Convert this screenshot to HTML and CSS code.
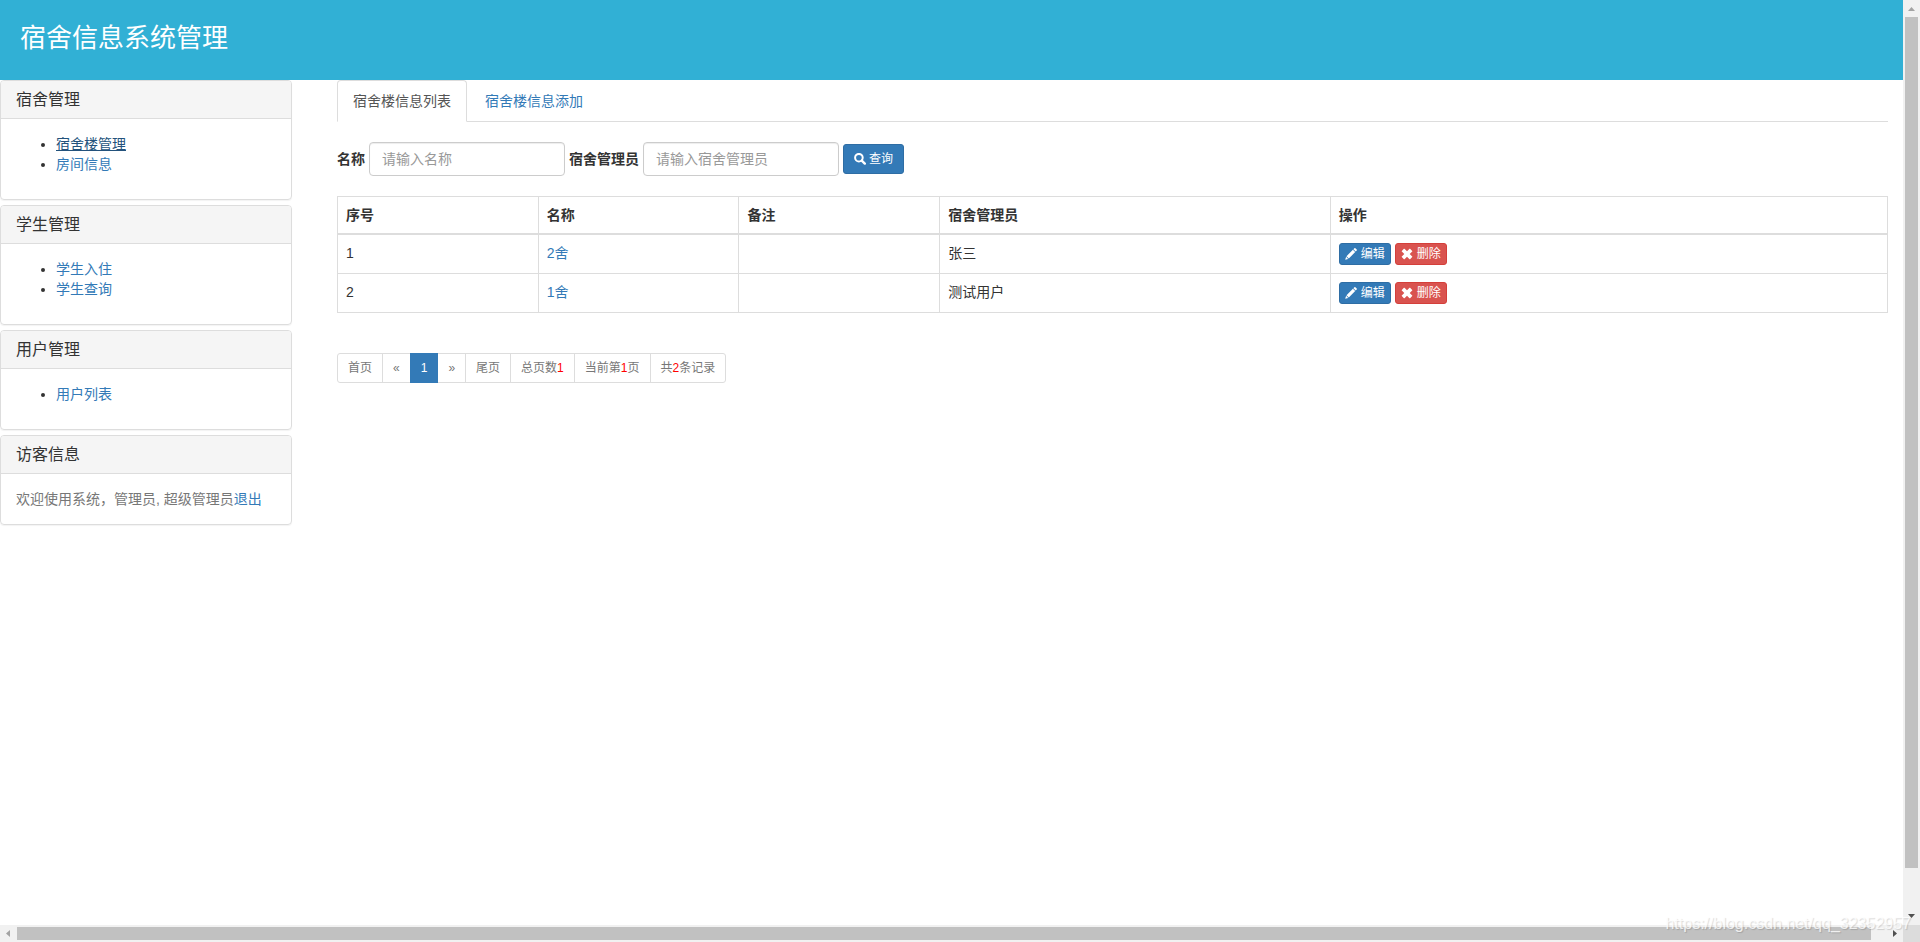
FILE: index.html
```html
<!DOCTYPE html>
<html lang="zh-CN">
<head>
<meta charset="utf-8">
<title>宿舍信息系统管理</title>
<link rel="stylesheet" href="styles.css">
</head>
<body>
<svg class="sprite" aria-hidden="true">
  <symbol id="icon-search" viewBox="0 0 12 12"><circle cx="4.900" cy="4.700" r="3.800" fill="none" stroke="currentColor" stroke-width="2"/><path d="M7.800 7.600 10.800 10.600" stroke="currentColor" stroke-width="2.400" stroke-linecap="round"/></symbol>
  <symbol id="icon-pencil" viewBox="0 0 12 12"><path fill="currentColor" d="M9.400.300q.500-.500 1 0l1.300 1.300q.500.500 0 1l-1 1L8.400 1.300zM7.900 1.800l2.300 2.300-6.400 6.400-2.300-2.300zM1.100 8.800l2.100 2.100L.200 11.800z"/></symbol>
  <symbol id="icon-remove" viewBox="0 0 12 12"><path fill="currentColor" d="M3.500.800 6 3.300 8.500.800q.300-.300.600 0l2.100 2.100q.300.300 0 .600L8.700 6l2.500 2.500q.300.300 0 .600l-2.100 2.100q-.300.300-.600 0L6 8.700l-2.500 2.500q-.300.300-.600 0L.800 9.100q-.300-.300 0-.600L3.300 6 .800 3.500q-.300-.300 0-.600L2.900.800q.300-.300.600 0z"/></symbol>
</svg>
<div class="window">
  <div class="page">
    <header class="banner"><h1>宿舍信息系统管理</h1></header>
    <div class="layout">
      <aside class="sidebar">
        <section class="panel">
          <h2>宿舍管理</h2>
          <ul>
            <li><a class="hover" href="#">宿舍楼管理</a></li>
            <li><a href="#">房间信息</a></li>
          </ul>
        </section>
        <section class="panel">
          <h2>学生管理</h2>
          <ul>
            <li><a href="#">学生入住</a></li>
            <li><a href="#">学生查询</a></li>
          </ul>
        </section>
        <section class="panel">
          <h2>用户管理</h2>
          <ul>
            <li><a href="#">用户列表</a></li>
          </ul>
        </section>
        <section class="panel">
          <h2>访客信息</h2>
          <p>欢迎使用系统，管理员, 超级管理员<a href="#">退出</a></p>
        </section>
      </aside>
      <main class="content">
        <nav class="tabs">
          <a class="active" href="#">宿舍楼信息列表</a>
          <a href="#">宿舍楼信息添加</a>
        </nav>
        <form class="search">
          <label for="name">名称</label>
          <input id="name" type="text" placeholder="请输入名称">
          <label for="manager">宿舍管理员</label>
          <input id="manager" type="text" placeholder="请输入宿舍管理员">
          <button class="btn btn-sm" type="button"><svg class="icon"><use href="#icon-search"/></svg>查询</button>
        </form>
        <table>
          <colgroup><col class="narrow"><col class="narrow"><col class="narrow"><col class="medium"><col></colgroup>
          <thead>
            <tr><th>序号</th><th>名称</th><th>备注</th><th>宿舍管理员</th><th>操作</th></tr>
          </thead>
          <tbody>
            <tr>
              <td>1</td><td><a href="#">2舍</a></td><td></td><td>张三</td>
              <td><div class="actions">
                <button class="btn btn-xs" type="button"><svg class="icon"><use href="#icon-pencil"/></svg>编辑</button>
                <button class="btn btn-xs danger" type="button"><svg class="icon"><use href="#icon-remove"/></svg>删除</button>
              </div></td>
            </tr>
            <tr>
              <td>2</td><td><a href="#">1舍</a></td><td></td><td>测试用户</td>
              <td><div class="actions">
                <button class="btn btn-xs" type="button"><svg class="icon"><use href="#icon-pencil"/></svg>编辑</button>
                <button class="btn btn-xs danger" type="button"><svg class="icon"><use href="#icon-remove"/></svg>删除</button>
              </div></td>
            </tr>
          </tbody>
        </table>
        <ul class="pagination">
          <li><a href="#">首页</a></li>
          <li><a href="#">«</a></li>
          <li class="active"><a href="#">1</a></li>
          <li><a href="#">»</a></li>
          <li><a href="#">尾页</a></li>
          <li><span>总页数<b>1</b></span></li>
          <li><span>当前第<b>1</b>页</span></li>
          <li><span>共<b>2</b>条记录</span></li>
        </ul>
      </main>
    </div>
  </div>
  <div class="scroll vertical">
    <svg class="arrow off" viewBox="0 0 17 17"><path d="M5 11h7L8.500 7z"/></svg>
    <div class="track"><div class="thumb"></div></div>
    <svg class="arrow" viewBox="0 0 17 17"><path d="M5 6h7l-3.500 4z"/></svg>
  </div>
  <div class="scroll horizontal">
    <svg class="arrow off" viewBox="0 0 17 17"><path d="M10 5v7L6 8.500z"/></svg>
    <div class="track"><div class="thumb"></div></div>
    <svg class="arrow" viewBox="0 0 17 17"><path d="M7 5v7l4-3.500z"/></svg>
  </div>
  <div class="corner"></div>
  <div class="watermark">https://blog.csdn.net/qq_32352957</div>
</div>
</body>
</html>
```
FILE: styles.css
```css
* { box-sizing: border-box; }
body {
  margin: 0;
  font: 14px/20px "Liberation Sans", "Noto Sans CJK SC", sans-serif;
  color: #333;
  background: #fff;
}
a { color: #337ab7; text-decoration: none; }
h1, h2, p, ul { margin: 0; padding: 0; }
.sprite { display: none; }

.window {
  position: relative;
  display: grid;
  grid-template: minmax(0, 1fr) 17px / minmax(0, 1fr) 17px;
  height: 100vh;
}
.page { overflow: hidden; }
.banner { min-height: 80px; padding: 20px; background: #31b0d5; color: #fff; }
.banner h1 { font-size: 26px; line-height: 36px; font-weight: 400; }
.layout {
  display: grid;
  grid-template-columns: 292px minmax(0, 1fr);
  gap: 45px;
  padding-right: 15px;
}

.sidebar { display: flex; flex-direction: column; gap: 5px; }
.panel { border: 1px solid #ddd; border-radius: 4px; box-shadow: 0 1px 1px rgba(0, 0, 0, .05); }
.panel h2 {
  padding: 10px 15px;
  border-bottom: 1px solid #ddd;
  border-radius: 3px 3px 0 0;
  background: #f5f5f5;
  font-size: 16px;
  line-height: 17px;
  font-weight: 400;
}
.panel ul { padding: 15px 15px 25px 55px; }
.panel p { padding: 15px; color: #777; }
.panel .hover { color: #23527c; text-decoration: underline; }

.tabs { display: flex; gap: 2px; border-bottom: 1px solid #ddd; }
.tabs a { margin-bottom: -1px; padding: 10px 15px; border: 1px solid transparent; border-radius: 4px 4px 0 0; }
.tabs .active { border-color: #ddd #ddd #fff; background: #fff; color: #555; }

.search { display: flex; align-items: center; gap: 4px; margin: 20px 0; }
.search label { font-weight: 700; }
.search input {
  width: 196px;
  height: 34px;
  padding: 6px 12px;
  border: 1px solid #ccc;
  border-radius: 4px;
  box-shadow: inset 0 1px 1px rgba(0, 0, 0, .075);
  font: inherit;
}
.search input::placeholder { color: #999; }

.btn {
  display: inline-flex;
  align-items: center;
  gap: 3px;
  border: 1px solid #2e6da4;
  border-radius: 3px;
  background: #337ab7;
  color: #fff;
  font: 12px/18px "Liberation Sans", "Noto Sans CJK SC", sans-serif;
}
.btn-sm { padding: 5px 10px; }
.btn-xs { padding: 1px 5px; gap: 4px; }
.danger { border-color: #d43f3a; background: #d9534f; }
.icon { width: 12px; height: 12px; }
.actions { display: flex; gap: 4px; }

table { width: 100%; border-collapse: collapse; table-layout: fixed; }
.narrow { width: 12.95%; }
.medium { width: 25.2%; }
th, td { padding: 8px; border: 1px solid #ddd; text-align: left; vertical-align: top; }
th { border-bottom-width: 2px; }

.pagination { display: flex; margin: 40px 0 20px; list-style: none; font-size: 12px; line-height: 18px; }
.pagination a, .pagination span { display: block; padding: 5px 10px; border: 1px solid #ddd; color: #777; }
.pagination li + li { margin-left: -1px; }
.pagination li:first-child a { border-radius: 3px 0 0 3px; }
.pagination li:last-child span { border-radius: 0 3px 3px 0; }
.pagination .active { z-index: 1; }
.pagination .active a { border-color: #337ab7; background: #337ab7; color: #fff; }
.pagination b { color: #f00; font-weight: 400; }

.scroll { display: flex; background: #f1f1f1; }
.vertical { flex-direction: column; }
.track { display: flex; flex: 1; }
.vertical .track { flex-direction: column; padding: 0 2px; }
.horizontal .track { padding: 2px 0; }
.thumb { background: #c1c1c1; }
.vertical .thumb { height: 95.5%; }
.horizontal .thumb { width: 99.2%; }
.arrow { width: 17px; height: 17px; fill: #505050; }
.arrow.off { fill: #a3a3a3; }
.corner { background: #dcdcdc; }
.watermark {
  position: absolute;
  right: 9px;
  bottom: 8px;
  color: rgba(255, 255, 255, .8);
  font-size: 16px;
  text-shadow: 1px 1px 1px rgba(0, 0, 0, .15);
}
```
